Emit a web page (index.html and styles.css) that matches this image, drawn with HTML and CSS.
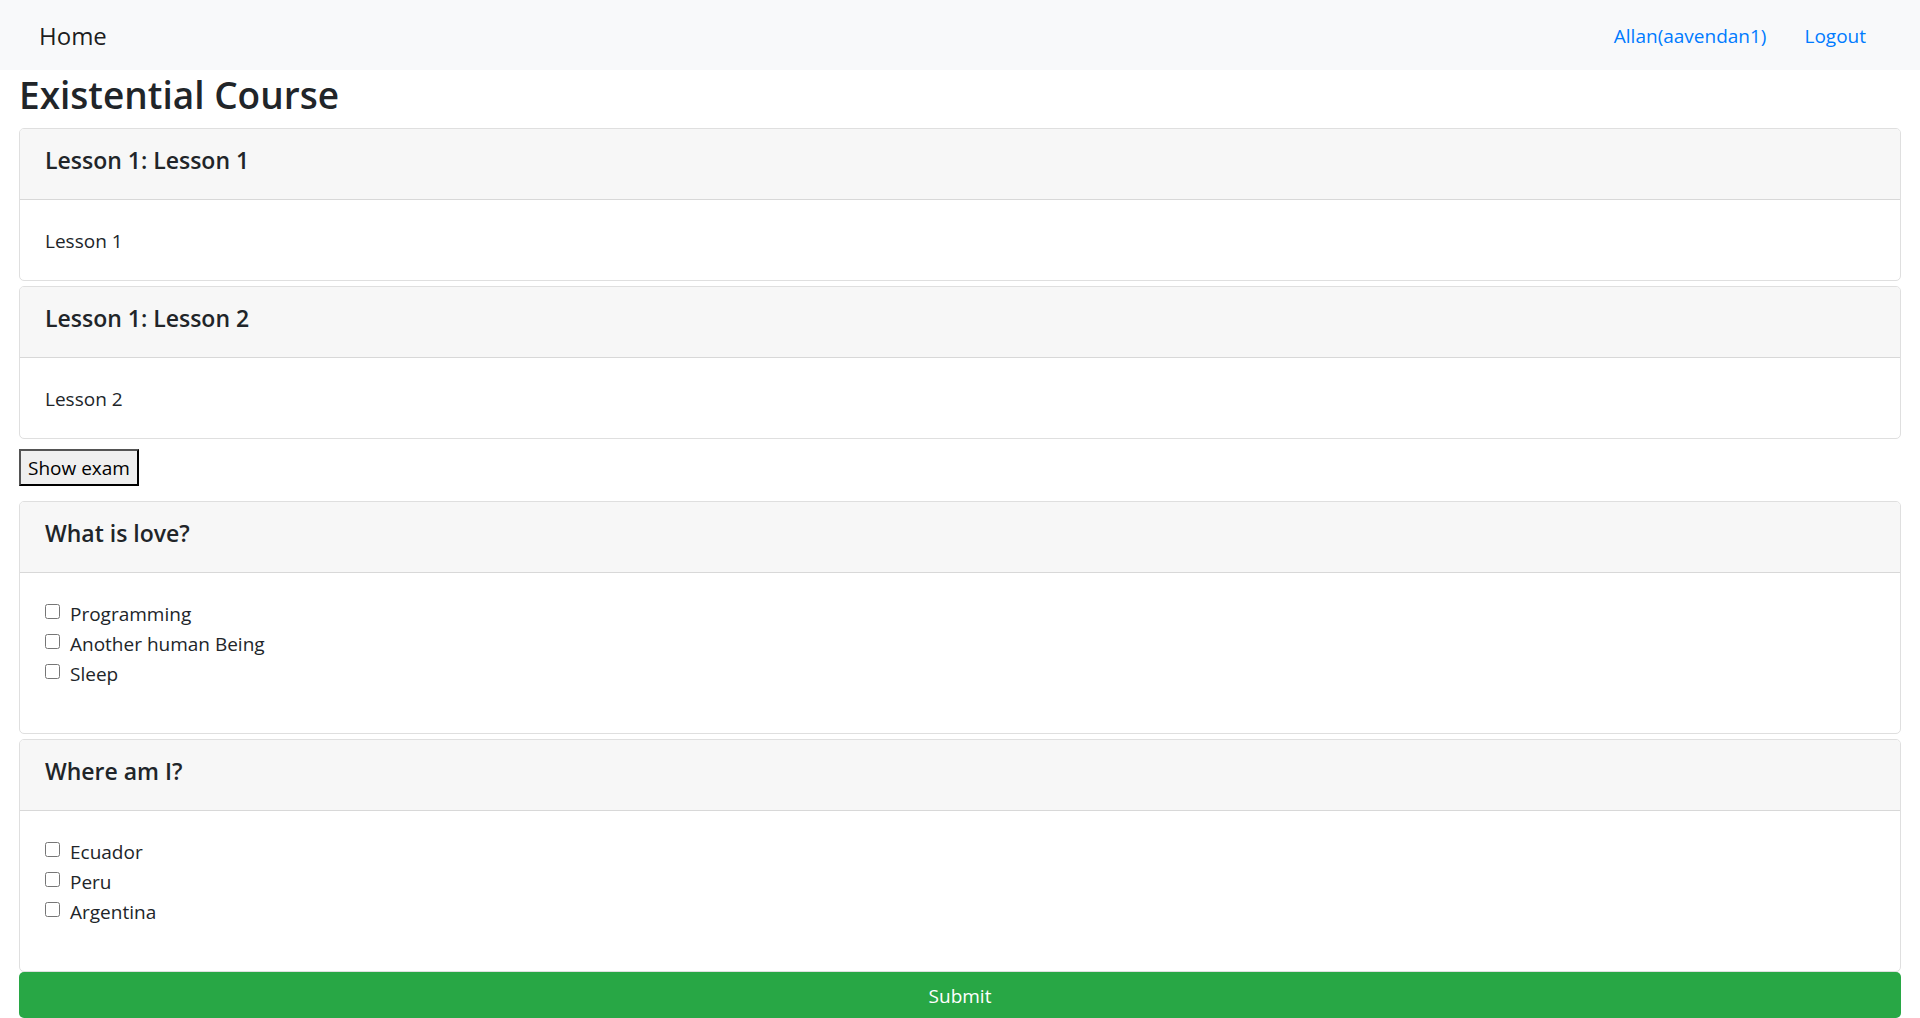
FILE: index.html
```html
<!DOCTYPE html>
<html lang="en">
<head>
<meta charset="utf-8">
<meta name="viewport" content="width=device-width, initial-scale=1">
<title>Existential Course</title>
<link rel="stylesheet" href="styles.css">
</head>
<body>
<nav class="navbar">
  <a class="brand" href="#">Home</a>
  <div class="nav-links">
    <a class="nav-link" href="#">Allan(aavendan1)</a>
    <a class="nav-link" href="#">Logout</a>
  </div>
</nav>
<main class="content">
  <h1 class="title">Existential Course</h1>
  <div class="stack">
    <section class="card">
      <header class="card-header"><h2 class="card-title">Lesson 1: Lesson 1</h2></header>
      <div class="card-body"><p>Lesson 1</p></div>
    </section>
    <section class="card">
      <header class="card-header"><h2 class="card-title">Lesson 1: Lesson 2</h2></header>
      <div class="card-body"><p>Lesson 2</p></div>
    </section>
  </div>
  <button class="toggle" type="button">Show exam</button>
  <form class="exam">
    <div class="stack">
      <section class="card">
        <header class="card-header"><h2 class="card-title">What is love?</h2></header>
        <div class="card-body options">
          <label class="option"><input class="check" type="checkbox">Programming</label>
          <label class="option"><input class="check" type="checkbox">Another human Being</label>
          <label class="option"><input class="check" type="checkbox">Sleep</label>
        </div>
      </section>
      <section class="card">
        <header class="card-header"><h2 class="card-title">Where am I?</h2></header>
        <div class="card-body options">
          <label class="option"><input class="check" type="checkbox">Ecuador</label>
          <label class="option"><input class="check" type="checkbox">Peru</label>
          <label class="option"><input class="check" type="checkbox">Argentina</label>
        </div>
      </section>
    </div>
    <button class="submit" type="submit">Submit</button>
  </form>
</main>
</body>
</html>
```
FILE: styles.css
```css
* { box-sizing: border-box; }

body {
  margin: 0;
  background: #fff;
  color: #212529;
  font-family: "Segoe UI", "Open Sans", "Noto Sans", sans-serif;
  font-size: 19px;
  line-height: 30px;
}

h1, h2, p { margin: 0; }

a { text-decoration: none; }

.navbar {
  display: flex;
  align-items: center;
  justify-content: space-between;
  min-height: 70px;
  padding: 11px 39px 9px;
  background: #f8f9fa;
}

.brand {
  color: rgba(0, 0, 0, 0.9);
  font-size: 24px;
}

.nav-links { display: flex; }

.nav-link {
  padding: 10px 15px;
  color: #007bff;
}

.nav-link + .nav-link { padding-left: 23px; }

.content { padding: 0 19px; }

.title {
  padding-top: 1px;
  margin-bottom: 9px;
  font-size: 37px;
  font-weight: 600;
  line-height: 48px;
}

.stack {
  display: flex;
  flex-direction: column;
  gap: 5px;
}

.card {
  border: 1px solid #dfdfdf;
  border-radius: 5px;
  background: #fff;
  overflow: hidden;
}

.card-header {
  padding: 16px 25px 24px;
  border-bottom: 1px solid #d8d8d8;
  background: #f7f7f7;
}

.card-title {
  font-size: 23px;
  font-weight: 600;
}

.card-body { padding: 26px 25px 24px; }

.options {
  display: flex;
  flex-direction: column;
  align-items: flex-start;
  padding-bottom: 44px;
}

.option {
  display: flex;
  gap: 10px;
}

.check {
  width: 15px;
  height: 15px;
  margin: 5px 0 0;
}

.toggle {
  display: block;
  margin: 10px 0 15px;
  padding: 2px 7px 1px;
  border: 2px outset #000;
  border-radius: 0;
  background: #efefef;
  color: #000;
  font: inherit;
}

.submit {
  display: block;
  width: 100%;
  padding: 9px 15px 7px;
  border: 0;
  border-radius: 5px;
  background: #28a745;
  color: #fff;
  font: inherit;
}
```
